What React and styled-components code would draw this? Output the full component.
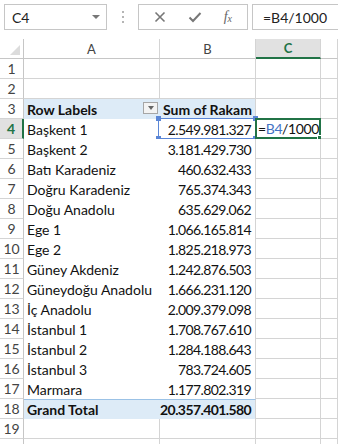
import styled, { createGlobalStyle } from 'styled-components';

const GlobalStyle = createGlobalStyle`
    html, body {
        margin: 0;
        padding: 0;
        background: #ffffff;
    }
    body {
        width: 338px;
        height: 444px;
        overflow: hidden;
        font-family: 'Lato', 'Liberation Sans', sans-serif;
    }
`;

const COLS = '24px 136px 96px 65px 1fr';
const GRID = '#d4d4d4';
const GREEN = '#217346';
const BLUE = '#5b86d6';

const Page = styled.div`
    width: 338px;
    height: 444px;
    overflow: hidden;
    background: #fff;
`;

const FormulaBar = styled.div`
    display: flex;
    align-items: center;
    height: 26px;
    padding: 4px 0 0 4px;
    margin-bottom: 9px;
`;

const NameBox = styled.div`
    box-sizing: border-box;
    width: 103px;
    height: 26px;
    border: 1px solid #c6c6c6;
    display: flex;
    align-items: center;
    justify-content: space-between;
    padding: 0 6px 0 7px;
    font-size: 14px;
    color: #222;
`;

const Caret = styled.span`
    width: 0;
    height: 0;
    border-left: 4px solid transparent;
    border-right: 4px solid transparent;
    border-top: 4px solid #777;
`;

const Grip = styled.div`
    width: 31px;
    display: flex;
    flex-direction: column;
    align-items: center;
    gap: 3px;
    & > span {
        width: 2px;
        height: 2px;
        background: #b5b5b5;
    }
`;

const ButtonGroup = styled.div`
    box-sizing: border-box;
    width: 110px;
    height: 26px;
    border: 1px solid #c6c6c6;
    display: flex;
    align-items: center;
    justify-content: space-around;
    padding: 0 4px;
    color: #7a7a7a;
`;

const Fx = styled.span`
    font-family: 'Liberation Serif', serif;
    font-style: italic;
    font-size: 14px;
    color: #666;
    & > sub {
        font-size: 10px;
        vertical-align: -1px;
    }
`;

const FormulaInput = styled.div`
    box-sizing: border-box;
    flex: 1;
    height: 26px;
    margin-left: 4px;
    border: 1px solid #c6c6c6;
    border-right: none;
    display: flex;
    align-items: center;
    padding-left: 10px;
    font-size: 14px;
    color: #222;
`;

const Row = styled.div`
    display: grid;
    grid-template-columns: ${COLS};
    height: 20px;
`;

const Corner = styled.div`
    box-sizing: border-box;
    position: relative;
    border-right: 1px solid #c6c6c6;
    border-bottom: 1px solid #c6c6c6;
    &::after {
        content: '';
        position: absolute;
        right: 3px;
        bottom: 3px;
        width: 0;
        height: 0;
        border-left: 10px solid transparent;
        border-bottom: 10px solid #dcdcdc;
    }
`;

const ColHead = styled.div`
    box-sizing: border-box;
    display: flex;
    align-items: center;
    justify-content: center;
    font-size: 13px;
    color: ${(p) => (p.$active ? GREEN : '#444')};
    font-weight: ${(p) => (p.$active ? 700 : 400)};
    background: ${(p) => (p.$active ? '#e1e1e1' : '#fff')};
    border-right: 1px solid ${GRID};
    border-bottom: ${(p) => (p.$active ? `2px solid ${GREEN}` : '1px solid #c6c6c6')};
`;

const RowHead = styled.div`
    box-sizing: border-box;
    display: flex;
    align-items: center;
    justify-content: center;
    font-size: 14px;
    color: ${(p) => (p.$active ? GREEN : '#444')};
    font-weight: ${(p) => (p.$active ? 700 : 400)};
    background: ${(p) => (p.$active ? '#e1e1e1' : '#fff')};
    border-right: ${(p) => (p.$active ? `2px solid ${GREEN}` : '1px solid #c6c6c6')};
    border-bottom: 1px solid ${GRID};
`;

const Cell = styled.div`
    box-sizing: border-box;
    position: relative;
    display: flex;
    align-items: center;
    justify-content: ${(p) => (p.$num ? 'flex-end' : 'flex-start')};
    padding: 0 4px 0 3px;
    font-size: 14px;
    letter-spacing: ${(p) => (p.$num ? '-0.6px' : '0')};
    color: #111;
    white-space: nowrap;
    font-weight: ${(p) => (p.$bold ? 700 : 400)};
    background: ${(p) => (p.$fill ? '#ddebf7' : '#fff')};
    border-right: ${(p) => (p.$noRight ? 'none' : `1px solid ${GRID}`)};
    border-bottom: ${(p) => (p.$noBottom ? 'none' : `1px solid ${GRID}`)};
    border-top: ${(p) => (p.$topLine ? '1px solid #9bc2e6' : 'none')};
`;

const FormulaCell = styled(Cell)`
    padding-left: 2px;
    letter-spacing: -0.4px;
`;

const FilterButton = styled.span`
    position: absolute;
    right: 2px;
    top: 3px;
    box-sizing: border-box;
    width: 15px;
    height: 12px;
    border: 1px solid #a6a6a6;
    background: #f3f3f3;
    display: flex;
    align-items: center;
    justify-content: center;
    &::after {
        content: '';
        border-left: 3.5px solid transparent;
        border-right: 3.5px solid transparent;
        border-top: 4px solid #666;
    }
`;

const RefBox = styled.span`
    position: absolute;
    left: -2px;
    top: -1px;
    right: -1px;
    bottom: 0;
    border: 1px solid ${BLUE};
    pointer-events: none;
`;

const Handle = styled.span`
    position: absolute;
    width: 5px;
    height: 5px;
    background: ${BLUE};
    ${(p) => (p.$top ? 'top: -3px;' : 'bottom: -3px;')}
    ${(p) => (p.$left ? 'left: -3px;' : 'right: -3px;')}
`;

const ActiveBox = styled.span`
    position: absolute;
    left: -1px;
    top: -1px;
    right: -1px;
    bottom: -1px;
    border: 2px solid ${GREEN};
    pointer-events: none;
    &::after {
        content: '';
        position: absolute;
        right: -5px;
        bottom: -5px;
        width: 5px;
        height: 5px;
        background: ${GREEN};
        border: 1px solid #fff;
    }
`;

const Ref = styled.span`
    color: #4472c4;
`;

const data = [
    ['Başkent 2', '3.181.429.730'],
    ['Batı Karadeniz', '460.632.433'],
    ['Doğru Karadeniz', '765.374.343'],
    ['Doğu Anadolu', '635.629.062'],
    ['Ege 1', '1.066.165.814'],
    ['Ege 2', '1.825.218.973'],
    ['Güney Akdeniz', '1.242.876.503'],
    ['Güneydoğu Anadolu', '1.666.231.120'],
    ['İç Anadolu', '2.009.379.098'],
    ['İstanbul 1', '1.708.767.610'],
    ['İstanbul 2', '1.284.188.643'],
    ['İstanbul 3', '783.724.605'],
    ['Marmara', '1.177.802.319'],
];

function CrossIcon() {
    return (
        <svg width="12" height="12" viewBox="0 0 12 12">
            <path d="M1.5 1.5 L10.5 10.5 M10.5 1.5 L1.5 10.5" stroke="#777" strokeWidth="1.6" fill="none" />
        </svg>
    );
}

function CheckIcon() {
    return (
        <svg width="14" height="12" viewBox="0 0 14 12">
            <path d="M1.5 6.5 L5 10 L12.5 2" stroke="#777" strokeWidth="2" fill="none" />
        </svg>
    );
}

function EmptyRow({ n }) {
    return (
        <Row>
            <RowHead>{n}</RowHead>
            <Cell />
            <Cell />
            <Cell />
            <Cell />
        </Row>
    );
}

export default function App() {
    return (
        <Page>
            <GlobalStyle />
            <FormulaBar>
                <NameBox>
                    C4
                    <Caret />
                </NameBox>
                <Grip>
                    <span />
                    <span />
                    <span />
                </Grip>
                <ButtonGroup>
                    <CrossIcon />
                    <CheckIcon />
                    <Fx>
                        f<sub>x</sub>
                    </Fx>
                </ButtonGroup>
                <FormulaInput>=B4/1000</FormulaInput>
            </FormulaBar>

            <Row>
                <Corner />
                <ColHead>A</ColHead>
                <ColHead>B</ColHead>
                <ColHead $active>C</ColHead>
                <ColHead />
            </Row>

            <EmptyRow n={1} />
            <EmptyRow n={2} />

            <Row>
                <RowHead>3</RowHead>
                <Cell $fill $bold $noRight $noBottom>
                    Row Labels
                    <FilterButton />
                </Cell>
                <Cell $fill $bold $noBottom>
                    Sum of Rakam
                </Cell>
                <Cell />
                <Cell />
            </Row>

            <Row>
                <RowHead $active>4</RowHead>
                <Cell $noRight $noBottom>Başkent 1</Cell>
                <Cell $num $noBottom>
                    2.549.981.327
                    <RefBox>
                        <Handle $top $left />
                        <Handle $top />
                        <Handle $left />
                        <Handle />
                    </RefBox>
                </Cell>
                <FormulaCell>
                    =<Ref>B4</Ref>/1000
                    <ActiveBox />
                </FormulaCell>
                <Cell />
            </Row>

            {data.map(([label, value], i) => (
                <Row key={label}>
                    <RowHead>{i + 5}</RowHead>
                    <Cell $noRight $noBottom>{label}</Cell>
                    <Cell $num $noBottom>{value}</Cell>
                    <Cell />
                    <Cell />
                </Row>
            ))}

            <Row>
                <RowHead>18</RowHead>
                <Cell $fill $bold $noRight $noBottom $topLine>
                    Grand Total
                </Cell>
                <Cell $fill $bold $num $noBottom $topLine>
                    20.357.401.580
                </Cell>
                <Cell />
                <Cell />
            </Row>

            <EmptyRow n={19} />
            <EmptyRow n="" />
        </Page>
    );
}
